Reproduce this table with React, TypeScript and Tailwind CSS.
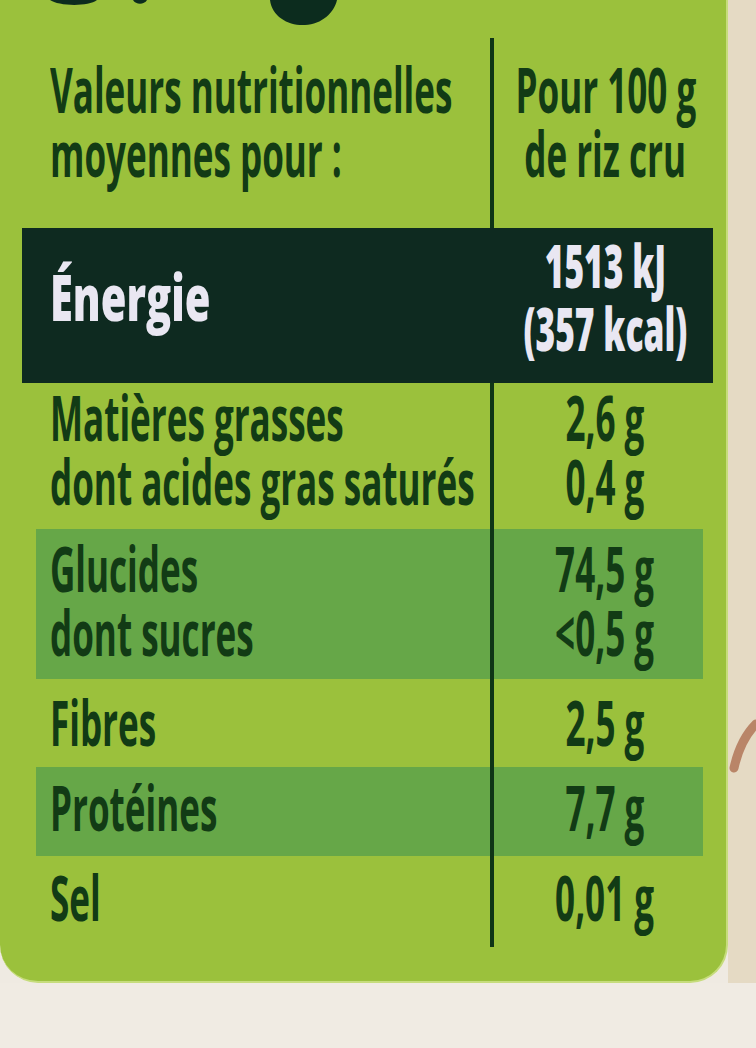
import type { ReactNode } from "react";

type Nutrient = {
  lines: string[];
  values: string[];
  band?: boolean;
  height: string;
  pad: string;
};

const rows: Nutrient[] = [
  {
    lines: ["Matières grasses", "dont acides gras saturés"],
    values: ["2,6 g", "0,4 g"],
    height: "h-[146px]",
    pad: "pt-[2px]",
  },
  {
    lines: ["Glucides", "dont sucres"],
    values: ["74,5 g", "<0,5 g"],
    band: true,
    height: "h-[150px]",
    pad: "pt-[7px]",
  },
  { lines: ["Fibres"], values: ["2,5 g"], height: "h-[88px]", pad: "pt-[11px]" },
  {
    lines: ["Protéines"],
    values: ["7,7 g"],
    band: true,
    height: "h-[89px]",
    pad: "pt-[8px]",
  },
  { lines: ["Sel"], values: ["0,01 g"], height: "h-[91px]", pad: "pt-[9px]" },
];

function Divider() {
  return <div className="w-[4px] shrink-0 self-stretch bg-[#0f3517]" />;
}

// the label's type is a very narrow condensed face; squeeze Open Sans to match
function Lines({ items, center }: { items: string[]; center?: boolean }) {
  return (
    <>
      {items.map((t) => (
        <div
          key={t}
          className={`flex whitespace-nowrap ${center ? "justify-center" : ""}`}
        >
          <span
            className={`inline-block scale-x-[0.565] ${center ? "origin-center" : "origin-left"}`}
          >
            {t}
          </span>
        </div>
      ))}
    </>
  );
}

function NutrientRow({ row }: { row: Nutrient }) {
  return (
    <div className={`flex ${row.height}`}>
      <div className="flex w-[490px] shrink-0 pl-[36px]">
        <div
          className={`min-w-0 flex-1 pl-[14px] ${row.pad} ${row.band ? "bg-[#66a748]" : ""}`}
        >
          <Lines items={row.lines} />
        </div>
      </div>
      <Divider />
      <div className="flex w-[219px] shrink-0">
        <div
          className={`mr-[10px] min-w-0 flex-1 pl-[12px] ${row.pad} ${row.band ? "bg-[#66a748]" : ""}`}
        >
          <Lines items={row.values} center />
        </div>
      </div>
    </div>
  );
}

function Label({ children }: { children: ReactNode }) {
  return (
    <div className="flex h-[983px] w-[728px] shrink-0 flex-col overflow-hidden rounded-b-[38px] border-r-2 border-b-2 border-[#c6dc7c] bg-[#9bc13c] font-['Open_Sans','Liberation_Sans',sans-serif] text-[62px] leading-[64px] font-bold text-[#123b15]">
      {children}
    </div>
  );
}

export default function App() {
  return (
    <div className="flex h-[1048px] w-[756px] flex-col overflow-hidden bg-[#efeae2]">
      <div className="flex">
        <Label>
          {/* bottom of the brand logo, cut off by the photo */}
          <svg className="h-[38px] w-[726px] shrink-0" viewBox="0 0 726 38">
            <path d="M50 0 C58 6 88 7 97 0 Z" fill="#0c2c1e" />
            <path d="M133 0 C136 5 144 5 147 0 Z" fill="#0c2c1e" />
            <path
              d="M270 0 C272 17 289 26 305 25 C322 24 334 13 337 0 Z"
              fill="#0c2c1e"
            />
          </svg>

          {/* header */}
          <div className="flex h-[190px]">
            <div className="w-[490px] shrink-0 pt-[19px] pl-[50px]">
              <Lines items={["Valeurs nutritionnelles", "moyennes pour :"]} />
            </div>
            <Divider />
            <div className="w-[219px] shrink-0 pt-[19px] pl-[4px]">
              <Lines items={["Pour 100 g", "de riz cru"]} center />
            </div>
          </div>

          {/* energy */}
          <div className="ml-[22px] flex h-[155px] w-[691px] bg-[#0e2a20] font-extrabold text-[#e9e7f2]">
            <div className="w-[468px] shrink-0 pt-[37px] pl-[28px] text-[64px]">
              <span className="inline-block origin-left scale-x-[0.65]">
                Énergie
              </span>
            </div>
            <div className="min-w-0 flex-1 pt-[6px] pl-[7px] text-[60px] leading-[63px]">
              <div className="flex justify-center whitespace-nowrap">
                <span className="inline-block scale-x-[0.56]">1513 kJ</span>
              </div>
              <div className="flex justify-center whitespace-nowrap">
                <span className="inline-block scale-x-[0.56]">(357 kcal)</span>
              </div>
            </div>
          </div>

          {rows.map((r) => (
            <NutrientRow key={r.lines[0]} row={r} />
          ))}
        </Label>

        <div className="flex-1 bg-[#e5dac4]">
          <svg className="mt-[710px] h-[70px] w-full" viewBox="0 0 28 70">
            <path
              d="M6 58 C10 40 18 24 28 14"
              stroke="#a9684a"
              strokeWidth="9"
              strokeLinecap="round"
              fill="none"
              opacity="0.75"
            />
          </svg>
        </div>
      </div>
      <div className="flex-1 bg-[#f0ebe3]" />
    </div>
  );
}
